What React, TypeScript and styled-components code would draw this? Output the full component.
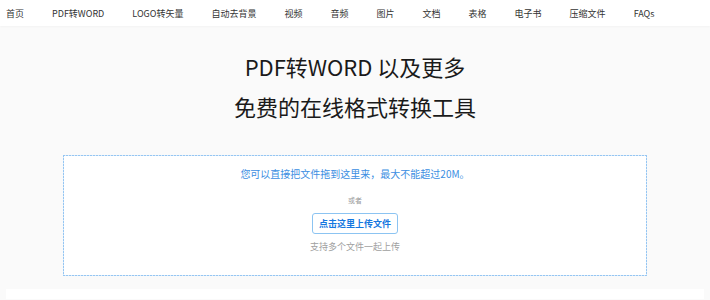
import React from 'react';
import styled, { createGlobalStyle } from 'styled-components';

const GlobalStyle = createGlobalStyle`
  html, body {
    margin: 0;
    padding: 0;
    background: #fafafa;
    font-family: "Noto Sans CJK SC", "Noto Sans", sans-serif;
    overflow: hidden;
  }
`;

const TopNav = styled.nav`
  height: 26px;
  background: #fff;
  display: flex;
  align-items: center;
  gap: 28px;
  padding-left: 6px;
  box-shadow: 0 1px 2px rgba(0, 0, 0, 0.03);
`;

const NavItem = styled.a`
  font-size: 9px;
  color: #333;
  text-decoration: none;
  white-space: nowrap;
  line-height: 1;
`;

const Main = styled.main`
  padding-top: 20px;
  display: flex;
  flex-direction: column;
  align-items: center;
`;

const Title = styled.h1`
  margin: 0;
  font-weight: 400;
  font-size: 22px;
  line-height: 40px;
  color: #1a1a1a;
  text-align: center;
`;

// dotted light-blue frame drawn with gradients so the dot colour stays true
const dots = (dir: string) =>
  `repeating-linear-gradient(${dir}, #96c6f2 0 2px, #d8eafb 2px 3px)`;

const DropZone = styled.div`
  box-sizing: border-box;
  margin-top: 29px;
  width: 584px;
  height: 121px;
  background:
    ${dots('90deg')} top / 100% 1px no-repeat,
    ${dots('90deg')} bottom / 100% 1px no-repeat,
    ${dots('180deg')} left / 1px 100% no-repeat,
    ${dots('180deg')} right / 1px 100% no-repeat,
    #fff;
  display: flex;
  flex-direction: column;
  align-items: center;
  padding-top: 11px;
`;

const Hint = styled.p`
  margin: 0;
  font-size: 10px;
  line-height: 16px;
  color: #3b8ee2;
`;

const OrText = styled.span`
  margin-top: 13px;
  font-size: 7px;
  line-height: 10px;
  color: #999;
`;

const UploadButton = styled.button`
  margin-top: 8px;
  width: 86px;
  height: 21px;
  background: #fff;
  border: 1px solid #8cc4f2;
  border-radius: 3px;
  color: #1677e0;
  font-family: inherit;
  font-size: 9px;
  font-weight: 700;
  padding: 0;
  cursor: pointer;
`;

const SubNote = styled.span`
  margin-top: 6px;
  font-size: 9px;
  line-height: 14px;
  color: #a0a0a0;
`;

const NextCard = styled.section`
  margin: 13px 6px 0;
  width: calc(100% - 12px);
  height: 10px;
  background: #fff;
`;

const navItems = ['首页', 'PDF转WORD', 'LOGO转矢量', '自动去背景', '视频', '音频', '图片', '文档', '表格', '电子书', '压缩文件', 'FAQs'];

export default function App() {
  return (
    <>
      <GlobalStyle />
      <TopNav>
        {navItems.map((item) => (
          <NavItem key={item} href="#">{item}</NavItem>
        ))}
      </TopNav>
      <Main>
        <Title>PDF转WORD 以及更多<br />免费的在线格式转换工具</Title>
        <DropZone>
          <Hint>您可以直接把文件拖到这里来，最大不能超过20M。</Hint>
          <OrText>或者</OrText>
          <UploadButton>点击这里上传文件</UploadButton>
          <SubNote>支持多个文件一起上传</SubNote>
        </DropZone>
        <NextCard />
      </Main>
    </>
  );
}
